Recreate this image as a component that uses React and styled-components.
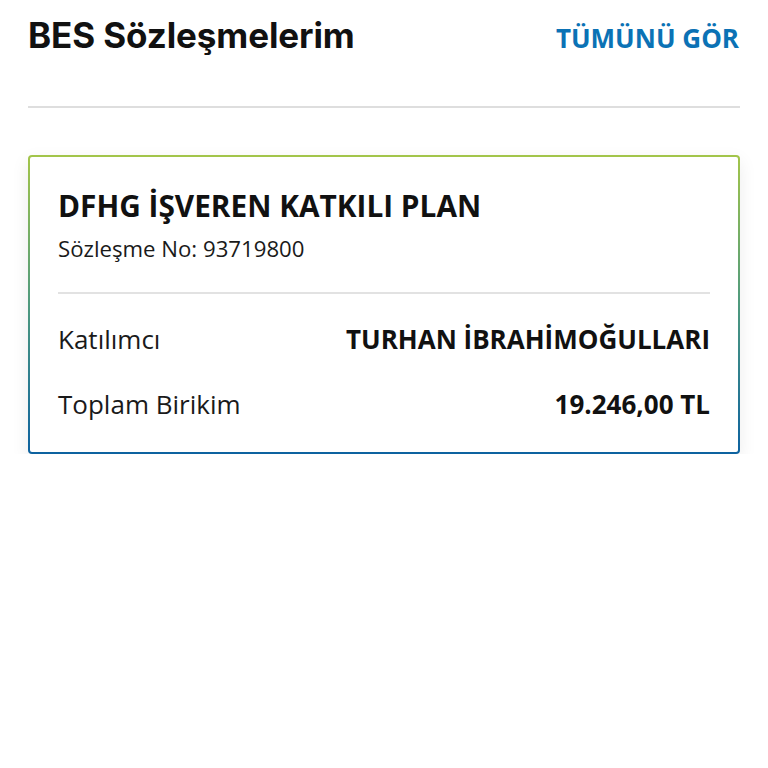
import styled, { createGlobalStyle } from "styled-components";

const GlobalStyle = createGlobalStyle`
  body {
    margin: 0;
    background: #fff;
    font-family: "Open Sans", "Noto Sans", sans-serif;
    color: #111;
  }
`;

const Page = styled.div`
  padding: 0 28px;
`;

const Header = styled.div`
  display: flex;
  justify-content: space-between;
  align-items: baseline;
  height: 108px;
  border-bottom: 2px solid #dedede;
  box-sizing: border-box;
  padding-top: 11px;
`;

const Title = styled.h1`
  margin: 0;
  font-family: Inter, "Noto Sans", sans-serif;
  font-weight: 700;
  font-size: 35px;
  line-height: 48px;
  letter-spacing: -0.1px;
  color: #111;
`;

const SeeAll = styled.a`
  font-weight: 700;
  font-size: 26px;
  line-height: 48px;
  color: #0b72b5;
  text-decoration: none;
  margin-right: 1px;
`;

const Card = styled.div`
  margin-top: 47px;
  border: 2px solid transparent;
  border-radius: 4px;
  background: linear-gradient(#fff, #fff) padding-box,
    linear-gradient(180deg, #a3c54a 0%, #4f9a7e 50%, #0d62a0 100%) border-box;
  box-shadow: 0 6px 18px rgba(0, 0, 0, 0.08);
  padding: 30px 28px 31px 28px;
`;

const PlanName = styled.div`
  font-weight: 700;
  font-size: 29.8px;
  line-height: 38px;
  color: #111;
`;

const ContractNo = styled.div`
  margin-top: 10px;
  font-size: 22.2px;
  line-height: 28px;
  color: #1a1a1a;
`;

const Divider = styled.div`
  height: 2px;
  background: #e2e2e2;
  margin: 29px 0 28px;
`;

const Row = styled.div`
  display: flex;
  justify-content: space-between;
  align-items: baseline;
  font-size: 26px;
  line-height: 34px;
  & + & {
    margin-top: 31px;
  }
`;

const Label = styled.span`
  color: #1a1a1a;
`;

const Value = styled.span`
  font-weight: 700;
  color: #111;
`;

export default function App() {
  return (
    <Page>
      <GlobalStyle />
      <Header>
        <Title>BES Sözleşmelerim</Title>
        <SeeAll href="#">TÜMÜNÜ GÖR</SeeAll>
      </Header>
      <Card>
        <PlanName>DFHG İŞVEREN KATKILI PLAN</PlanName>
        <ContractNo>Sözleşme No: 93719800</ContractNo>
        <Divider />
        <Row>
          <Label>Katılımcı</Label>
          <Value>TURHAN İBRAHİMOĞULLARI</Value>
        </Row>
        <Row>
          <Label>Toplam Birikim</Label>
          <Value>19.246,00 TL</Value>
        </Row>
      </Card>
    </Page>
  );
}
